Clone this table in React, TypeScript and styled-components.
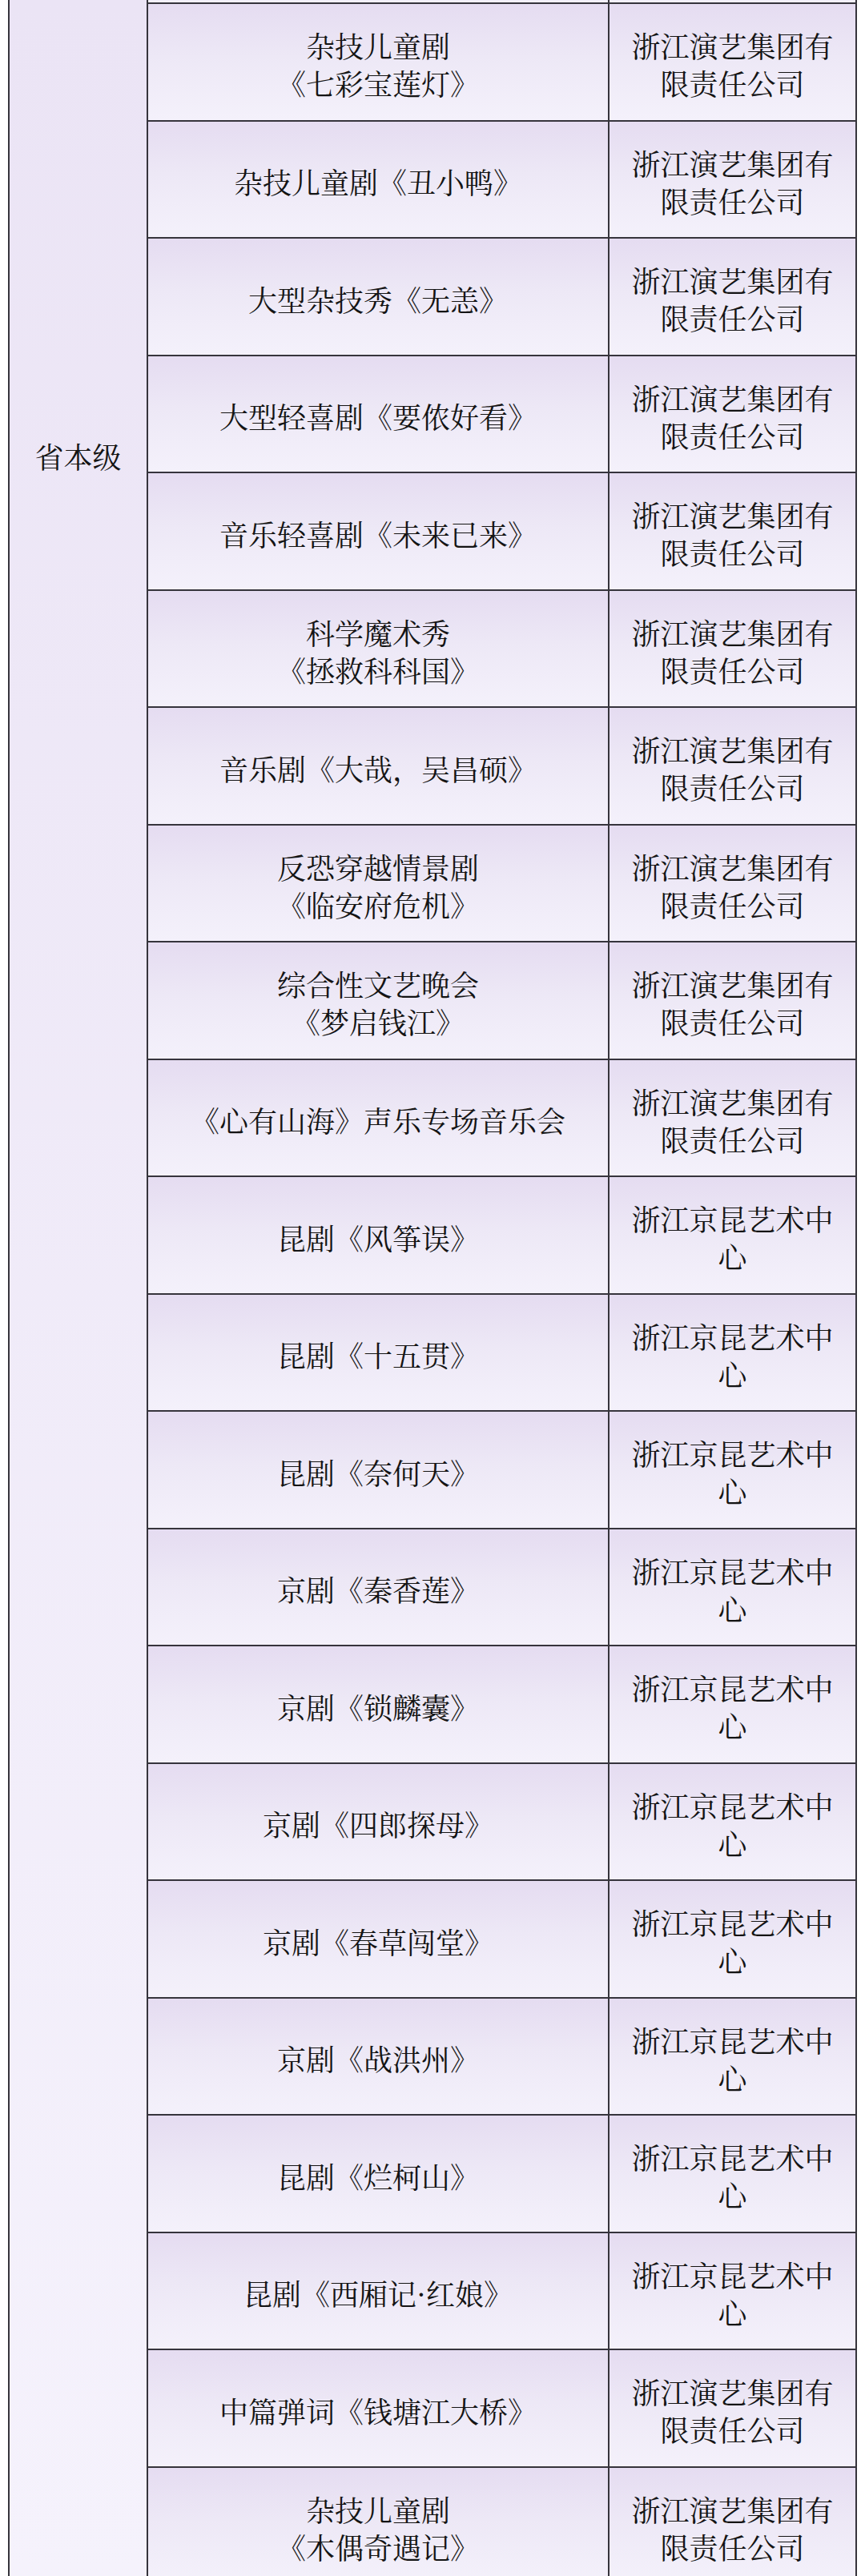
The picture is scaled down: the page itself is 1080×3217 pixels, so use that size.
import styled, { createGlobalStyle } from "styled-components";

const GlobalStyle = createGlobalStyle`
  html, body {
    margin: 0;
    padding: 0;
    background: #ffffff;
  }
  body {
    overflow: hidden;
    font-family: "Noto Serif CJK SC", "Noto Sans CJK SC", "Liberation Serif", serif;
    color: #141414;
  }
`;

const Table = styled.div`
  display: flex;
  width: 1070px;
  height: 3217px;
  padding-left: 10px;
  box-sizing: border-box;
  overflow: hidden;
`;

const LevelCell = styled.div`
  width: 175px;
  flex: none;
  box-sizing: border-box;
  border-left: 2px solid #36343c;
  border-right: 2px solid #36343c;
  background: linear-gradient(to bottom, #ebe4f5, #f5f2fc);
  padding-top: 546px;
  text-align: center;
  font-size: 36px;
  line-height: 47px;
`;

const Rows = styled.div`
  flex: 1;
  box-sizing: border-box;
  border-right: 2px solid #36343c;
  display: flex;
  flex-direction: column;
`;

const Tail = styled.div`
  height: 3px;
  flex: none;
  display: grid;
  grid-template-columns: 574px 1fr;
  background: #f3f0fb;
`;

const TailRight = styled.div`
  border-left: 2px solid #36343c;
`;

const Row = styled.div`
  flex: none;
  height: 146.5px;
  box-sizing: border-box;
  border-top: 2px solid #36343c;
  display: grid;
  grid-template-columns: 574px 1fr;
  background: linear-gradient(to bottom, #e5dcf1 0%, #ede8f6 45%, #f4f1fb 100%);
`;

const Cell = styled.div`
  display: flex;
  align-items: center;
  justify-content: center;
  text-align: center;
  font-size: 36px;
  line-height: 47px;
  padding: 6px 16px 0;
  box-sizing: border-box;
`;

const CompanyCell = styled(Cell)`
  border-left: 2px solid #36343c;
`;

const YY = "浙江演艺集团有限责任公司";
const JK = "浙江京昆艺术中心";

const shows: { title: string[]; org: string }[] = [
  { title: ["杂技儿童剧", "《七彩宝莲灯》"], org: YY },
  { title: ["杂技儿童剧《丑小鸭》"], org: YY },
  { title: ["大型杂技秀《无恙》"], org: YY },
  { title: ["大型轻喜剧《要侬好看》"], org: YY },
  { title: ["音乐轻喜剧《未来已来》"], org: YY },
  { title: ["科学魔术秀", "《拯救科科国》"], org: YY },
  { title: ["音乐剧《大哉，吴昌硕》"], org: YY },
  { title: ["反恐穿越情景剧", "《临安府危机》"], org: YY },
  { title: ["综合性文艺晚会", "《梦启钱江》"], org: YY },
  { title: ["《心有山海》声乐专场音乐会"], org: YY },
  { title: ["昆剧《风筝误》"], org: JK },
  { title: ["昆剧《十五贯》"], org: JK },
  { title: ["昆剧《奈何天》"], org: JK },
  { title: ["京剧《秦香莲》"], org: JK },
  { title: ["京剧《锁麟囊》"], org: JK },
  { title: ["京剧《四郎探母》"], org: JK },
  { title: ["京剧《春草闯堂》"], org: JK },
  { title: ["京剧《战洪州》"], org: JK },
  { title: ["昆剧《烂柯山》"], org: JK },
  { title: ["昆剧《西厢记·红娘》"], org: JK },
  { title: ["中篇弹词《钱塘江大桥》"], org: YY },
  { title: ["杂技儿童剧", "《木偶奇遇记》"], org: YY },
];

export default function App() {
  return (
    <>
      <GlobalStyle />
      <Table>
        <LevelCell>省本级</LevelCell>
        <Rows>
          <Tail>
            <div />
            <TailRight />
          </Tail>
          {shows.map((s, i) => (
            <Row key={i}>
              <Cell>
                <div>
                  {s.title.map((line, j) => (
                    <div key={j}>{line}</div>
                  ))}
                </div>
              </Cell>
              <CompanyCell>{s.org}</CompanyCell>
            </Row>
          ))}
        </Rows>
      </Table>
    </>
  );
}
